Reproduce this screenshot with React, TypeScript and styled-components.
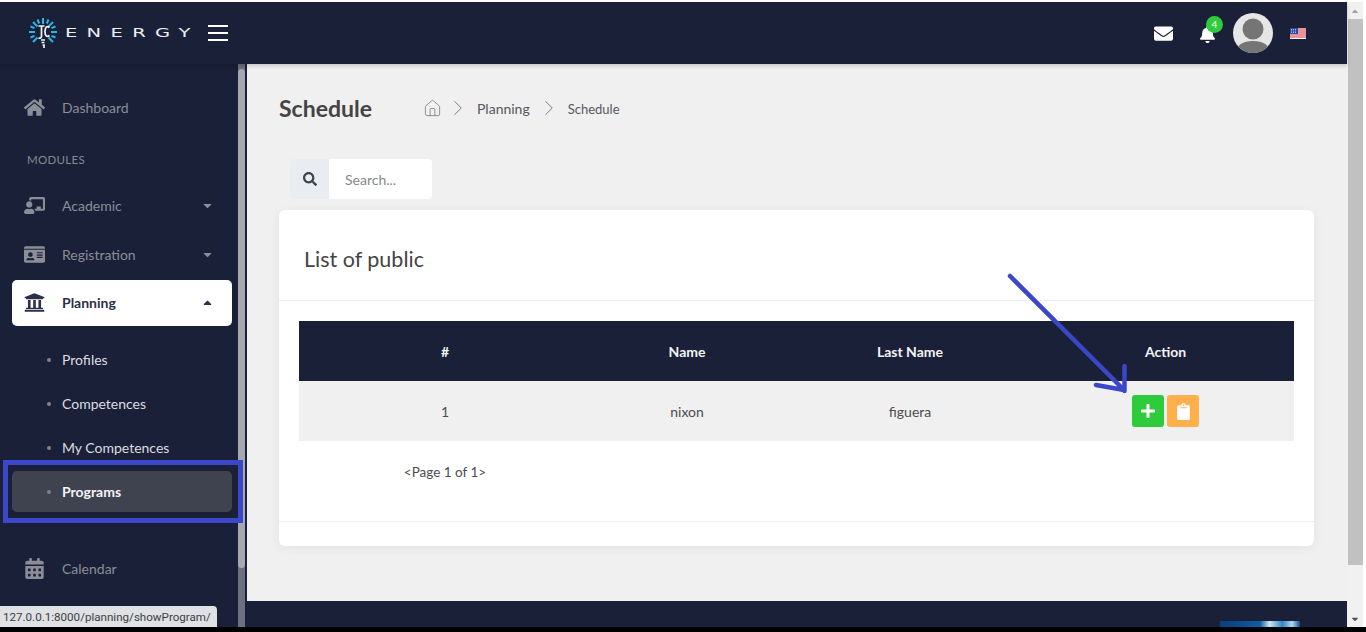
import React, { FunctionComponent } from 'react';
import styled, { createGlobalStyle } from 'styled-components';
import { IconType } from 'react-icons/lib';
import {
  FaHome,
  FaChalkboardTeacher,
  FaIdCard,
  FaUniversity,
  FaCalendarAlt,
  FaSearch,
  FaPlus,
  FaClipboard,
  FaEnvelope,
  FaBell,
  FaCaretDown,
  FaCaretUp
} from 'react-icons/fa';
import { Home, ChevronRight } from 'lucide-react';

const navy = '#1a2037';
const blue = '#3c46c8';

const GlobalStyle = createGlobalStyle`
  html, body {
    margin: 0;
    padding: 0;
    height: 632px;
    overflow: hidden;
    background: #fff;
    font-family: Lato, "Open Sans", sans-serif;
  }
  * { box-sizing: border-box; }
`;

const Screen = styled.div`
  position: relative;
  width: 1366px;
  height: 632px;
  padding: 2px 3px 0 0;
  display: flex;
  flex-direction: column;
  overflow: hidden;
`;

const Window = styled.div`
  display: flex;
  height: 625px;
`;

const BlackEdge = styled.div`
  height: 5px;
  background: #000;
  margin-right: -3px;
`;

const PageColumn = styled.div`
  flex: 1;
  min-width: 0;
  display: flex;
  flex-direction: column;
`;

const Header = styled.header`
  height: 62px;
  flex: none;
  background: ${navy};
  display: flex;
  align-items: center;
  padding-left: 28px;
  padding-right: 41px;
  z-index: 2;
  box-shadow: 0 2px 4px rgba(0, 0, 0, 0.18);
`;

const LogoText = styled.span`
  margin: 0 0 2px 7px;
  width: 135px;
  color: #eceef2;
  font-family: "DejaVu Sans", sans-serif;
  font-size: 13px;
  letter-spacing: 6.200px;
  transform: scaleX(1.5);
  transform-origin: left center;
`;

const Hamburger = styled.button`
  width: 20px;
  height: 16px;
  padding: 0;
  margin-left: 8px;
  border: 0;
  background: transparent;
  display: flex;
  flex-direction: column;
  justify-content: space-between;
  span {
    display: block;
    height: 2px;
    background: #fff;
  }
`;

const HeaderRight = styled.div`
  margin-left: auto;
  display: flex;
  align-items: center;
`;

const MailIcon = styled(FaEnvelope)`
  color: #fff;
  font-size: 19px;
  margin-right: -1px;
`;

const BellWrap = styled.div`
  position: relative;
  margin-left: 27px;
  margin-top: 2px;
  display: flex;
  color: #fff;
  font-size: 17px;
`;

const Badge = styled.span`
  position: absolute;
  top: -10px;
  left: 7px;
  width: 17px;
  height: 17px;
  border-radius: 50%;
  background: #2ecc3a;
  color: #fff;
  font-size: 10px;
  line-height: 17px;
  text-align: center;
`;

const Avatar = styled.svg`
  width: 40px;
  height: 40px;
  margin-left: 17px;
  border-radius: 50%;
`;

const Flag = styled.svg`
  width: 16px;
  height: 11px;
  margin-left: 17px;
`;

const Body = styled.div`
  flex: 1;
  min-height: 0;
  display: flex;
`;

const Sidebar = styled.aside`
  position: relative;
  width: 247px;
  flex: none;
  background: ${navy};
  padding: 21px 15px 0 12px;
`;

const SideTrack = styled.div`
  position: absolute;
  top: 0;
  bottom: 0;
  left: 238px;
  width: 7px;
  background: #6c7080;
`;

const SideThumb = styled.div`
  position: absolute;
  top: 5px;
  left: 238px;
  width: 7px;
  height: 499px;
  border-radius: 4px;
  background: #a6a7b0;
`;

const NavItem = styled.div<{ $active?: boolean }>`
  height: 46px;
  margin-bottom: 2.500px;
  display: flex;
  align-items: center;
  padding: 0 18px 1px 12px;
  border-radius: 5px;
  background: ${props => (props.$active ? '#fff' : 'transparent')};
  color: ${props => (props.$active ? '#2b3048' : '#8a8e98')};
  font-size: 14px;
  font-weight: ${props => (props.$active ? 700 : 400)};
`;

const NavIcon = styled.span`
  width: 38px;
  flex: none;
  display: flex;
  font-size: 21px;
`;

const Caret = styled.span`
  margin-left: auto;
  display: flex;
  font-size: 13px;
`;

const ModulesLabel = styled.div`
  height: 52.500px;
  padding: 19px 0 0 15px;
  margin-bottom: -3px;
  color: #858993;
  font-size: 11.500px;
  line-height: 14px;
  letter-spacing: 0.300px;
`;

const SubList = styled.div`
  padding-top: 10.500px;
`;

const SubItem = styled.div<{ $current?: boolean }>`
  height: 41px;
  margin-bottom: 3px;
  display: flex;
  align-items: center;
  padding-left: 35px;
  border-radius: 5px;
  background: ${props => (props.$current ? '#3f4350' : 'transparent')};
  color: ${props => (props.$current ? '#f4f4f6' : '#dcdde2')};
  font-size: 14px;
  font-weight: ${props => (props.$current ? 700 : 400)};
  &::before {
    content: '';
    width: 4px;
    height: 4px;
    margin-right: 11px;
    border-radius: 50%;
    background: #7d818c;
  }
`;

const CalendarSlot = styled.div`
  margin-top: 34px;
`;

const MainColumn = styled.div`
  flex: 1;
  min-width: 0;
  display: flex;
  flex-direction: column;
`;

const Main = styled.main`
  flex: 1;
  min-height: 0;
  background: #f0f0f0;
  padding: 30px 33px 0 32px;
`;

const Footer = styled.footer`
  height: 26px;
  flex: none;
  background: ${navy};
  display: flex;
  align-items: flex-end;
  padding-left: 973px;
`;

const FooterImage = styled.div`
  width: 80px;
  height: 6px;
  background: linear-gradient(90deg, #0a3f7c 0%, #0e5ca6 50%, #cfe4f2 62%, #2f86c6 78%, #b8d8ec 90%, #0b4f94 100%);
`;

const TitleRow = styled.div`
  height: 28px;
  display: flex;
  align-items: center;
`;

const PageTitle = styled.h1`
  margin: 0;
  width: 145px;
  color: #444;
  font-size: 23px;
  font-weight: 700;
`;

const Crumbs = styled.nav`
  display: flex;
  align-items: center;
  color: #55585e;
  font-size: 14px;
  svg {
    color: #77797d;
  }
`;

const CrumbHome = styled(Home)`
  margin-left: -1px;
  margin-right: -3px;
`;

const CrumbSep = styled(ChevronRight)`
  margin: 0 6px;
`;

const CrumbLast = styled.span`
  padding-top: 1px;
  font-size: 13px;
`;

const SearchBox = styled.div`
  display: flex;
  width: 142px;
  height: 40px;
  margin: 37px 0 11px 11px;
  border-radius: 4px;
  overflow: hidden;
`;

const SearchAddon = styled.div`
  width: 39px;
  flex: none;
  background: #e9edf1;
  color: #3f444a;
  font-size: 14px;
  display: flex;
  align-items: center;
  justify-content: center;
`;

const SearchInput = styled.input`
  flex: 1;
  min-width: 0;
  border: 0;
  outline: 0;
  padding: 0 0 0 16px;
  background: #fff;
  font-family: inherit;
  font-size: 14px;
  &::placeholder {
    color: #85888d;
    opacity: 1;
  }
`;

const Card = styled.section`
  height: 336px;
  background: #fff;
  border-radius: 6px;
  box-shadow: 0 2px 12px rgba(0, 0, 0, 0.06);
`;

const CardHeader = styled.div`
  height: 91px;
  padding: 36px 25px 0;
  border-bottom: 1px solid #eee;
  color: #444;
  font-size: 21.500px;
  line-height: 27px;
`;

const CardBody = styled.div`
  height: 221px;
  padding: 20px 20px 0;
  border-bottom: 1px solid #eee;
`;

const Table = styled.table`
  width: 995px;
  table-layout: fixed;
  border-collapse: collapse;
  font-size: 14px;
  text-align: center;
`;

const HeadCell = styled.th`
  height: 60px;
  padding: 0;
  background: ${navy};
  color: #f4f4f6;
  font-weight: 700;
`;

const Cell = styled.td`
  height: 60px;
  padding: 0;
  background: #f0f0f0;
  color: #4b4d52;
`;

const Actions = styled.div`
  display: flex;
  justify-content: center;
  gap: 3px;
`;

const ActionButton = styled.button<{ $color: string; $size: number }>`
  width: 32px;
  height: 32px;
  padding: 0;
  border: 0;
  border-radius: 3px;
  background: ${props => props.$color};
  color: #fff;
  font-size: ${props => props.$size}px;
  display: flex;
  align-items: center;
  justify-content: center;
`;

const Pager = styled.div`
  width: 292px;
  margin-top: 23px;
  color: #4b4d52;
  font-size: 13.500px;
  line-height: 17px;
  text-align: center;
`;

const PageScrollbar = styled.div`
  width: 16px;
  flex: none;
  background: #f1f1f1;
  display: flex;
  flex-direction: column;
  align-items: center;
`;

const ScrollArrow = styled.div<{ $down?: boolean }>`
  height: 17px;
  flex: none;
  display: flex;
  align-items: center;
  color: ${props => (props.$down ? '#505050' : '#a3a3a3')};
  font-size: 10px;
`;

const ScrollThumb = styled.div`
  width: 15px;
  height: 546px;
  background: #c1c1c1;
`;

const ScrollFill = styled.div`
  flex: 1;
`;

const StatusBubble = styled.div`
  position: absolute;
  left: 0;
  top: 606px;
  width: 217px;
  height: 21px;
  padding: 3px 0 0 3px;
  background: #dfe1e5;
  border-top-right-radius: 4px;
  color: #3c4043;
  font-family: Roboto, sans-serif;
  font-size: 11.600px;
  line-height: 17px;
  white-space: nowrap;
  z-index: 5;
`;

const HighlightBox = styled.div`
  position: absolute;
  left: 3px;
  top: 460px;
  width: 240px;
  height: 63px;
  border: 5px solid ${blue};
  z-index: 4;
`;

const ArrowMark = styled.svg`
  position: absolute;
  left: 1000px;
  top: 265px;
  width: 140px;
  height: 135px;
  z-index: 4;
`;

const Logo: FunctionComponent = () => (
  <svg width="30" height="32" viewBox="0 0 30 32" fill="none">
    <g stroke="#25b7e6" strokeWidth="2">
      <path d="M15 1v6M1 15h6M23 15h6" />
      <path d="M5 5l4.500 4.500M25 5l-4.500 4.500M5 25l4.500-4.500M25 25l-4.500-4.500" />
      <path d="M9.500 2.500l1.700 4M20.500 2.500l-1.700 4M2.500 9.500l4 1.700M27.500 9.500l-4 1.700M2.500 20.500l4-1.700M27.500 20.500l-4-1.700" />
    </g>
    <g stroke="#f2f4f6" strokeWidth="1.700">
      <path d="M10.500 9h6M13.500 9v10c0 2-1.500 2.500-3 2" />
      <path d="M21.500 10.500c-2.500-2-4.500-.500-4.500 4s2 6 4.500 4" />
      <path d="M13 23h4M13.500 25.500h3M14.500 28h1.500v3" />
    </g>
  </svg>
);

const navTop: { name: string; Icon: IconType }[] = [
  { name: 'Academic', Icon: FaChalkboardTeacher },
  { name: 'Registration', Icon: FaIdCard }
];

const subItems = ['Profiles', 'Competences', 'My Competences'];

const App: FunctionComponent = () => {
  return (
    <Screen>
      <GlobalStyle />
      <Window>
        <PageColumn>
          <Header>
            <Logo />
            <LogoText>ENERGY</LogoText>
            <Hamburger>
              <span />
              <span />
              <span />
            </Hamburger>
            <HeaderRight>
              <MailIcon />
              <BellWrap>
                <FaBell />
                <Badge>4</Badge>
              </BellWrap>
              <Avatar viewBox="0 0 40 40">
                <rect width="40" height="40" fill="#e6e6e6" />
                <circle cx="20" cy="16" r="10.500" fill="#757575" />
                <path d="M3 40c0-8 7-12 17-12s17 4 17 12z" fill="#757575" />
              </Avatar>
              <Flag viewBox="0 0 16 11">
                <rect width="16" height="11" fill="#f4f4f4" />
                <path d="M0 1h16M0 3h16M0 5h16M0 7h16M0 9h16" stroke="#d8343c" strokeWidth="1" />
                <rect width="8" height="6" fill="#2c4aa8" />
                <path d="M1 1.500h6M1 3h6M1 4.500h6" stroke="#e8ecf6" strokeWidth="0.700" strokeDasharray="1 1" />
              </Flag>
            </HeaderRight>
          </Header>
          <Body>
            <Sidebar>
              <SideTrack />
              <SideThumb />
              <NavItem>
                <NavIcon><FaHome /></NavIcon>
                Dashboard
              </NavItem>
              <ModulesLabel>MODULES</ModulesLabel>
              {navTop.map(({ name, Icon }) => (
                <NavItem key={name}>
                  <NavIcon><Icon /></NavIcon>
                  {name}
                  <Caret><FaCaretDown /></Caret>
                </NavItem>
              ))}
              <NavItem $active>
                <NavIcon><FaUniversity /></NavIcon>
                Planning
                <Caret><FaCaretUp /></Caret>
              </NavItem>
              <SubList>
                {subItems.map(name => (
                  <SubItem key={name}>{name}</SubItem>
                ))}
                <SubItem $current>Programs</SubItem>
              </SubList>
              <CalendarSlot>
                <NavItem>
                  <NavIcon><FaCalendarAlt /></NavIcon>
                  Calendar
                </NavItem>
              </CalendarSlot>
            </Sidebar>
            <MainColumn>
              <Main>
                <TitleRow>
                  <PageTitle>Schedule</PageTitle>
                  <Crumbs>
                    <CrumbHome size={19} strokeWidth={1} />
                    <CrumbSep size={26} strokeWidth={0.900} />
                    Planning
                    <CrumbSep size={26} strokeWidth={0.900} />
                    <CrumbLast>Schedule</CrumbLast>
                  </Crumbs>
                </TitleRow>
                <SearchBox>
                  <SearchAddon><FaSearch /></SearchAddon>
                  <SearchInput placeholder="Search..." />
                </SearchBox>
                <Card>
                  <CardHeader>List of public</CardHeader>
                  <CardBody>
                    <Table>
                      <colgroup>
                        <col width="292" />
                        <col width="192" />
                        <col width="254" />
                        <col width="257" />
                      </colgroup>
                      <thead>
                        <tr>
                          <HeadCell>#</HeadCell>
                          <HeadCell>Name</HeadCell>
                          <HeadCell>Last Name</HeadCell>
                          <HeadCell>Action</HeadCell>
                        </tr>
                      </thead>
                      <tbody>
                        <tr>
                          <Cell>1</Cell>
                          <Cell>nixon</Cell>
                          <Cell>figuera</Cell>
                          <Cell>
                            <Actions>
                              <ActionButton $color="#2ecc3a" $size={16}><FaPlus /></ActionButton>
                              <ActionButton $color="#ffb04a" $size={17}><FaClipboard /></ActionButton>
                            </Actions>
                          </Cell>
                        </tr>
                      </tbody>
                    </Table>
                    <Pager>{'<Page 1 of 1>'}</Pager>
                  </CardBody>
                </Card>
              </Main>
              <Footer>
                <FooterImage />
              </Footer>
            </MainColumn>
          </Body>
        </PageColumn>
        <PageScrollbar>
          <ScrollArrow><FaCaretUp /></ScrollArrow>
          <ScrollThumb />
          <ScrollFill />
          <ScrollArrow $down><FaCaretDown /></ScrollArrow>
        </PageScrollbar>
      </Window>
      <BlackEdge />
      <StatusBubble>127.0.0.1:8000/planning/showProgram/</StatusBubble>
      <HighlightBox />
      <ArrowMark viewBox="0 0 140 135" fill="none">
        <path
          d="M10 11L124 125M124.500 101V126M96 120L124 125"
          stroke={blue}
          strokeWidth="4.500"
          strokeLinecap="round"
        />
      </ArrowMark>
    </Screen>
  );
};

export default App;
